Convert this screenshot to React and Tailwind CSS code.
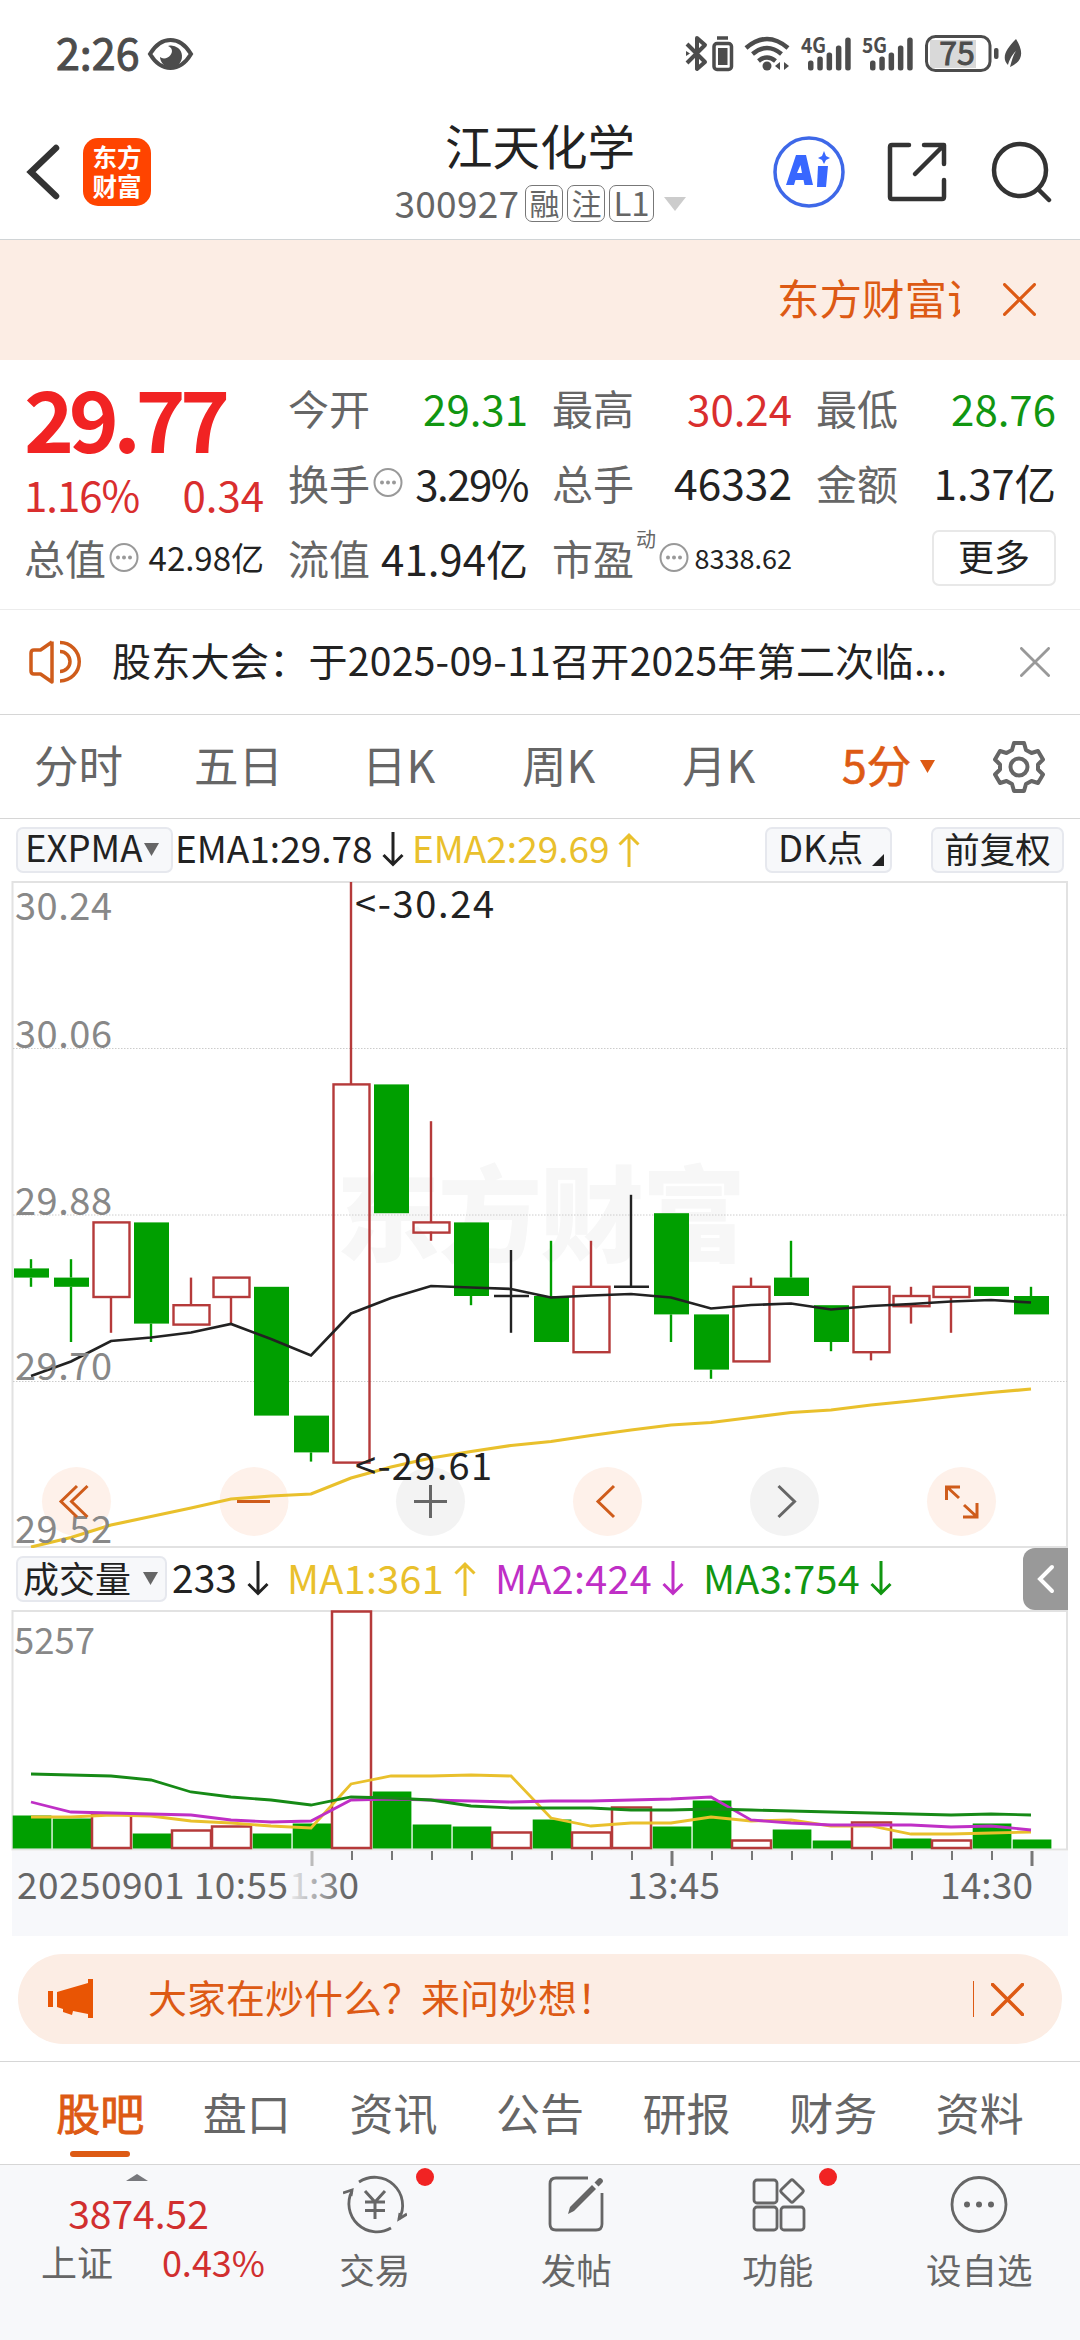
import clsx from "clsx";

const RED = "#b53a3a";
const GREEN = "#009f00";
const INK = "#222222";

// Candles: [type, body top, body bottom, high, low], in cents below 30.24
const candles = [
  ["down", 42, 43, 41, 44],
  ["down", 43, 44, 41, 50],
  ["up", 37, 45, 37, 49],
  ["down", 37, 48, 37, 50],
  ["up", 46, 48, 43, 48],
  ["up", 43, 45, 43, 48],
  ["down", 44, 58, 44, 58],
  ["down", 58, 62, 58, 63],
  ["up", 22, 63, 0, 63],
  ["down", 22, 36, 22, 36],
  ["up", 37, 38, 26, 39],
  ["down", 37, 45, 37, 46],
  ["flat", 45, 45, 40, 49],
  ["down", 45, 50, 39, 50],
  ["up", 44, 51, 39, 51],
  ["flat", 44, 44, 34, 44],
  ["down", 36, 47, 36, 50],
  ["down", 47, 53, 47, 54],
  ["up", 44, 52, 43, 52],
  ["down", 43, 45, 39, 45],
  ["down", 46, 50, 46, 51],
  ["up", 44, 51, 44, 52],
  ["up", 45, 46, 44, 48],
  ["up", 44, 45, 44, 49],
  ["down", 44, 45, 44, 45],
  ["down", 45, 47, 44, 47],
];

const ema1 = [495, 480.5, 460, 456.5, 451.5, 443, 458, 474.5, 432.5, 417, 405, 406.5, 408, 416.5, 414.5, 413, 416.5, 427.5, 424, 422.5, 428.5, 425, 423, 420.5, 419, 421.5];
const ema2 = [666, 656.5, 644, 635.5, 627, 618, 615, 613, 597, 586, 577, 570.5, 564.5, 560.5, 554.5, 549, 544, 541.5, 536.5, 531.5, 529, 524, 520, 515.5, 511.5, 508];

const volumes = [
  ["down", 33], ["down", 30], ["up", 34], ["down", 15], ["up", 18], ["up", 22], ["down", 15],
  ["down", 25], ["up", 237], ["down", 57], ["down", 24], ["down", 22], ["up", 16], ["down", 29],
  ["up", 16], ["up", 41], ["down", 22], ["down", 48], ["up", 8], ["down", 19], ["down", 8],
  ["up", 26], ["down", 10], ["up", 8], ["down", 25], ["down", 9],
];
const volMa1 = [207, 207, 205, 206, 211, 213, 216, 218, 174, 166, 166, 165, 166, 208, 216, 213, 213, 207, 211, 210, 216, 216, 224, 224, 223, 222];
const volMa2 = [192, 202, 203, 204, 205, 210, 212, 211, 190, 189, 190, 191, 192, 191, 191, 190, 189, 187, 210, 213, 215, 215, 215, 217, 216, 220];
const volMa3 = [164, 165, 166, 170, 182, 187, 190, 195, 187, 188, 190, 196, 198, 198, 198, 200, 200, 199, 200, 201, 202, 203, 204, 205, 204, 205];

const cx = (i) => 31 + i * 40;
const toPoints = (list) => list.map((y, i) => `${cx(i)},${y}`).join(" ");

function StatusBar() {
  const bars = [10, 14, 18, 25, 33];
  return (
    <div className="flex h-[108px] items-center justify-between pl-[56px] pr-[50px]">
      <div className="flex items-center gap-[7px]">
        <span className="pb-[5px] text-[43px] leading-none text-[#4c4c4c] [-webkit-text-stroke:1px_#4c4c4c]">2:26</span>
        <svg width="47" height="34" viewBox="0 0 47 34">
          <path d="M3 17C9 7 16 3 23.500 3S38 7 44 17C38 27 31 31 23.500 31S9 27 3 17Z" fill="none" stroke="#4c4c4c" strokeWidth="4" />
          <path d="M23 8.500A11 11 0 1 1 13 20C16 22.500 21 21.500 23.500 18S25.500 11 21 9Z" fill="#4c4c4c" />
        </svg>
      </div>
      <svg width="350" height="46" viewBox="680 31 350 46" fill="none" stroke="#4c4c4c">
        <path d="M687 44L705 62L697 69V38L705 45L687 63" strokeWidth="4" strokeLinejoin="round" />
        <path d="M686 51L690 53.500L686 56Z" fill="#4c4c4c" stroke="none" />
        <path d="M717 38H728" strokeWidth="3.500" />
        <rect x="714" y="43.500" width="17.500" height="26" rx="3" strokeWidth="3.500" />
        <rect x="718" y="48" width="9.500" height="17" fill="#4c4c4c" stroke="none" />
        <path d="M746 48Q767 30 788 48" strokeWidth="4.500" />
        <path d="M752.500 54Q767 42 781.500 54" strokeWidth="4.500" />
        <path d="M758.500 61Q767 54 775.500 61" strokeWidth="4.500" />
        <circle cx="767" cy="66" r="4.500" fill="#4c4c4c" stroke="none" />
        <path d="M780 62V70L775 66ZM784 62V70L789 66Z" fill="#4c4c4c" stroke="none" />
        <g fill="#4c4c4c" stroke="none" fontWeight="700" fontSize="21">
          <text x="801" y="53" textLength="25" lengthAdjust="spacingAndGlyphs">4G</text>
          <text x="862" y="53" textLength="25" lengthAdjust="spacingAndGlyphs">5G</text>
          {[808, 870].map((left) =>
            bars.map((h, i) => (
              <rect key={`${left}-${i}`} x={left + i * 9.3} y={70.5 - h} width="5.500" height={h} rx="2.500" />
            ))
          )}
        </g>
        <rect x="930" y="40" width="46" height="28" fill="#d9d9d9" stroke="none" />
        <rect x="926.500" y="36.500" width="63.500" height="34" rx="9" strokeWidth="3" />
        <rect x="994" y="48" width="4.500" height="11" rx="2" fill="#4c4c4c" stroke="none" />
        <text x="957" y="65" textAnchor="middle" fontSize="32" fill="#4c4c4c" strokeWidth="1">75</text>
        <path d="M1016 39C1023 50 1024 60 1012 66L1010 67C1012 60 1013 55 1016 51C1011 56 1009 61 1008 65C1001 58 1006 49 1016 39Z" fill="#4c4c4c" stroke="none" />
      </svg>
    </div>
  );
}

function Badge({ children }) {
  return (
    <span className="flex h-[37px] items-center justify-center rounded-[7px] border border-[#777] px-[3px] pb-[3px] text-[30px] leading-none">
      {children}
    </span>
  );
}

function Header() {
  return (
    <div className="flex h-[132px] items-center border-b border-[#d0d4d6]">
      <div className="flex w-[380px] items-center pb-[3px] pl-[26px]">
        <svg width="34" height="56" viewBox="0 0 34 56" fill="none">
          <path d="M30 4L5 28L30 52" stroke="#333" strokeWidth="6.500" strokeLinecap="round" />
        </svg>
        <div className="ml-[23px] flex h-[68px] w-[68px] flex-col items-center justify-center rounded-[15px] bg-[#ff4400] pb-[3px] text-[24.500px] font-bold leading-[29px] text-white">
          <span>东方</span>
          <span>财富</span>
        </div>
      </div>
      <div className="flex w-[320px] flex-col items-center">
        <span className="text-[47.500px] leading-[59px] text-[#222]">江天化学</span>
        <div className="flex items-center gap-[4px] pb-px pt-[2px] text-[#666]">
          <span className="mr-[2px] pb-[4px] text-[37px] leading-[52px] tracking-[0.300px]">300927</span>
          <Badge>融</Badge>
          <Badge>注</Badge>
          <Badge>
            <span className="text-[33px]">L1</span>
          </Badge>
          <svg width="22" height="14" viewBox="0 0 22 14" className="ml-[6px]">
            <path d="M0 0H22L11 14Z" fill="#ccc" />
          </svg>
        </div>
      </div>
      <div className="flex flex-1 items-center pb-[3px] pl-[72px]">
        <svg width="74" height="74" viewBox="0 0 74 74">
          <circle cx="37" cy="37" r="34" fill="none" stroke="#3e68e8" strokeWidth="3.500" />
          <path d="M14 50L24 20H34L41 50H32.500L31.500 45H23.500L22 50ZM25 38H30L28.500 30Z" fill="#3867ff" fillRule="evenodd" />
          <path d="M46 31H56L54 52H45Z" fill="#3867ff" />
          <path d="M52 16L54 21L58 23L54 25L52 29L50 25L46 23L50 21Z" fill="#3867ff" />
        </svg>
        <svg width="60" height="60" viewBox="0 0 60 60" fill="none" stroke="#333" strokeWidth="4.500" strokeLinecap="round" strokeLinejoin="round" className="ml-[41px]">
          <path d="M22 3H5Q3 3 3 5V55Q3 57 5 57H55Q57 57 57 55V38" />
          <path d="M37 3H57V22M56 4L28 32" />
        </svg>
        <svg width="62" height="64" viewBox="0 0 62 64" fill="none" stroke="#333" strokeWidth="4.500" strokeLinecap="round" className="ml-[43px]">
          <circle cx="30" cy="30" r="26" />
          <path d="M48 49L59 60" />
        </svg>
      </div>
    </div>
  );
}

function Cross({ size, color, width }) {
  return (
    <svg width={size} height={size} viewBox="0 0 32 32">
      <path d="M1.500 1.500L30.500 30.500M30.500 1.500L1.500 30.500" stroke={color} strokeWidth={width} strokeLinecap="round" />
    </svg>
  );
}

function Marquee() {
  return (
    <div className="flex h-[120px] items-center bg-[#fcede4] pb-[2px] pl-[777px]">
      <div className="w-[183px] overflow-hidden whitespace-nowrap pb-[5px] text-[42.500px] leading-[60px] text-[#dd5a14]">东方财富证券</div>
      <div className="ml-[43px]">
        <Cross size={33} color="#dd5a14" width={3} />
      </div>
    </div>
  );
}

function InfoDot() {
  return (
    <svg width="30" height="31" viewBox="0 0 30 31" className="ml-[3px] shrink-0">
      <circle cx="15" cy="15.500" r="13.500" fill="none" stroke="#999" strokeWidth="2" />
      <circle cx="9" cy="15.500" r="2" fill="#999" />
      <circle cx="15" cy="15.500" r="2" fill="#999" />
      <circle cx="21" cy="15.500" r="2" fill="#999" />
    </svg>
  );
}

function Stat({ label, sup, info, value, valueClass = "text-[42.500px] text-[#222]" }) {
  return (
    <div className="flex h-[75px] items-center whitespace-nowrap pb-[6px] leading-none">
      <span className="text-[41px] text-[#666]">{label}</span>
      {sup && <span className="mb-[38px] ml-[2px] text-[20px] text-[#666]">{sup}</span>}
      {info && <InfoDot />}
      <span className={clsx("ml-auto", valueClass)}>{value}</span>
    </div>
  );
}

function Quote() {
  return (
    <div className="grid h-[250px] grid-cols-4 gap-x-6 border-b border-[#ececec] px-6 pt-[13px]">
      <div>
        <div className="flex h-[84px] items-center whitespace-nowrap text-[85px] font-bold leading-none tracking-[-5.500px] text-[#f12323]">
          29.77
        </div>
        <div className="flex h-[66px] items-center justify-between pt-[7px] text-[42px] leading-none text-[#d92e2e]">
          <span className="tracking-[-1px]">1.16%</span>
          <span>0.34</span>
        </div>
        <Stat label="总值" info value="42.98亿" valueClass="text-[33px] text-[#222]" />
      </div>
      <div>
        <Stat label="今开" value="29.31" valueClass="text-[42px] text-[#119611]" />
        <Stat label="换手" info value="3.29%" valueClass="text-[42px] tracking-[-1.500px] text-[#222]" />
        <Stat label="流值" value="41.94亿" valueClass="text-[42px] text-[#222]" />
      </div>
      <div>
        <Stat label="最高" value="30.24" valueClass="text-[42px] text-[#d92e2e]" />
        <Stat label="总手" value="46332" />
        <Stat label="市盈" sup="动" info value="8338.62" valueClass="text-[27px] text-[#222]" />
      </div>
      <div>
        <Stat label="最低" value="28.76" valueClass="text-[42px] text-[#119611]" />
        <Stat label="金额" value="1.37亿" valueClass="text-[41.500px] text-[#222]" />
        <div className="flex h-[70px] items-center justify-end">
          <div className="flex h-[56px] w-[124px] items-center justify-center rounded-[7px] border-2 border-[#e8e8e8] pb-[6px] text-[36px] leading-none text-[#222]">
            更多
          </div>
        </div>
      </div>
    </div>
  );
}

function Notice() {
  return (
    <div className="flex h-[105px] items-center border-b border-[#d6d6d6] pl-[28px] pr-[30px]">
      <svg width="54" height="46" viewBox="0 0 54 46" fill="none" stroke="#cf5c1b" strokeWidth="3.500">
        <path d="M24 2.500V43L12.500 35H6Q3 35 3 32V14Q3 11 6 11H12.500L24 3" strokeLinejoin="round" />
        <path d="M32 3.500A19 19 0 0 1 32 42" />
        <path d="M32 12.500A9.700 9.700 0 0 1 32 32.500" />
      </svg>
      <span className="ml-[30px] whitespace-nowrap pb-[5px] text-[39px] leading-none tracking-[0.300px] text-[#222]">
        股东大会：于2025-09-11召开2025年第二次临...
      </span>
      <div className="ml-auto">
        <Cross size={30} color="#999" width={3} />
      </div>
    </div>
  );
}

function PeriodTabs() {
  const tabs = ["分时", "五日", "日K", "周K", "月K"];
  return (
    <div className="flex h-[104px] items-center border-b border-[#d6d6d6] text-[44.500px] leading-none text-[#666]">
      {tabs.map((t) => (
        <span key={t} className="w-[160px] pb-[5px] pr-[3px] text-center">{t}</span>
      ))}
      <div className="flex w-[180px] items-center pl-[42px] text-[#dd5a14] [-webkit-text-stroke:0.700px_#dd5a14]">
        <span className="pb-[5px]">5分</span>
        <svg width="16" height="14" viewBox="0 0 16 14" className="ml-[9px]">
          <path d="M0 0H15L7.500 13Z" fill="#dd5a14" />
        </svg>
      </div>
      <svg width="54" height="54" viewBox="0 0 54 54" fill="none" stroke="#666" strokeWidth="4" strokeLinejoin="round" className="ml-[12px]">
        <path d="M22 3H32L34 10L39.500 13L46 11L51 19.500L46 24.500V29.500L51 34.500L46 43L39.500 41L34 44L32 51H22L20 44L14.500 41L8 43L3 34.500L8 29.500V24.500L3 19.500L8 11L14.500 13L20 10Z" />
        <circle cx="27" cy="27" r="8.500" />
      </svg>
    </div>
  );
}

function Arrow({ up, color }) {
  return (
    <svg width="22" height="36" viewBox="0 0 22 36" fill="none" stroke={color} strokeWidth="3" className="shrink-0">
      <path d={up ? "M11 35V3M1.500 12.500L11 3L20.500 12.500" : "M11 0V32M1.500 23L11 32.500L20.500 23"} />
    </svg>
  );
}

const chip = "flex h-[46px] items-center rounded-[7px] border-2 border-[#e6e8ee] bg-[#f7f8fa]";

function IndicatorRow() {
  return (
    <div className="flex h-[62px] items-center whitespace-nowrap pl-[16px] pr-[16px] text-[36.500px] leading-none text-[#222]">
      <div className={clsx(chip, "w-[157px] pl-[7px]")}>
        <span className="pb-[5px]">EXPMA</span>
        <svg width="16" height="14" viewBox="0 0 16 14" className="ml-[2px]">
          <path d="M0 0H15L7.500 13Z" fill="#666" />
        </svg>
      </div>
      <span className="ml-[2px] w-[207px] pb-[5px] text-[37px]">EMA1:29.78</span>
      <Arrow color={INK} />
      <span className="ml-[8px] w-[206px] pb-[5px] text-[37px] text-[#e9c02c]">EMA2:29.69</span>
      <Arrow up color="#e9c02c" />
      <div className={clsx(chip, "ml-auto w-[127px] pl-[11px]")}>
        <span className="pb-[5px]">DK点</span>
        <svg width="12" height="12" viewBox="0 0 12 12" className="ml-[9px] mt-[20px] shrink-0">
          <path d="M12 0V12H0Z" fill="#222" />
        </svg>
      </div>
      <div className={clsx(chip, "ml-[39px] w-[133px] justify-center text-[35.500px]")}>
        <span className="pb-[5px]">前复权</span>
      </div>
    </div>
  );
}

function Candle({ item, i }) {
  const [type, top, bottom, high, low] = item;
  const x = cx(i);
  const y = (n) => 1 + n * 9.2;
  const color = type === "up" ? RED : type === "down" ? GREEN : INK;
  return (
    <g stroke={color} strokeWidth="2.400">
      {high < top && <path d={`M${x} ${y(high)}V${y(top)}`} />}
      {low > bottom && <path d={`M${x} ${y(bottom)}V${y(low)}`} />}
      {type === "up" && <rect x={x - 17.5} y={y(top)} width="36" height={y(bottom) - y(top) + 1} fill="none" />}
      {type === "down" && <rect x={x - 17} y={y(top)} width="35" height={y(bottom) - y(top)} fill={GREEN} stroke="none" />}
      {type === "flat" && <path d={`M${x - 17} ${y(top)}H${x + 18}`} />}
    </g>
  );
}

function PriceChart() {
  const labels = [
    ["30.24", 39],
    ["30.06", 167],
    ["29.88", 334],
    ["29.70", 499],
    ["29.52", 662],
  ];
  return (
    <svg width="1080" height="667" viewBox="0 0 1080 667" className="block">
      <text x="336" y="373" textLength="410" fill="#f7f7f7" fontSize="104" fontWeight="900">东方财富</text>
      <rect x="12.500" y="1" width="1054.500" height="665" fill="none" stroke="#e2e2e2" strokeWidth="2" />
      <path d="M13 167.500H1067M13 334H1067M13 500.500H1067" stroke="#ccc" strokeDasharray="1.500 1.500" />
      {[["#fef1ea", 76.5], ["#fef1ea", 254], ["#f3f3f3", 430.5], ["#fef1ea", 607.5], ["#f3f3f3", 784.5], ["#fef1ea", 961.5]].map(([fill, x]) => (
        <circle key={x} cx={x} cy="620.500" r="34.500" fill={fill} />
      ))}
      {candles.map((c, i) => (
        <Candle key={i} item={c} i={i} />
      ))}
      <polyline points={toPoints(ema1)} fill="none" stroke={INK} strokeWidth="2.700" />
      <polyline points={toPoints(ema2)} fill="none" stroke="#e9c02c" strokeWidth="3.200" />
      <g fontSize="38" fill="#888">
        {labels.map(([text, y]) => (
          <text key={text} x="15" y={y} textLength="97">{text}</text>
        ))}
      </g>
      <g fontSize="38" fill={INK}>
        <text x="355" y="37" textLength="139">&lt;-30.24</text>
        <text x="355" y="599" textLength="137">&lt;-29.61</text>
      </g>
      <g fill="none" stroke="#cf5c1b" strokeWidth="3">
        <path d="M77 605L61 620.500L77 636M87.500 605L71.500 620.500L87.500 636" />
        <path d="M237 620.500H270" />
        <path d="M414 620.500H447M430.500 604V637" stroke="#666" />
        <path d="M614 605L598 620.500L614 636" />
        <path d="M778.500 605L794.500 620.500L778.500 636" stroke="#666" />
        <path d="M946.500 619V606H960M947 606L959 617M964 624L976 635M977 622V636H963" />
      </g>
    </svg>
  );
}

function VolumeHeader() {
  return (
    <div className="flex h-[62px] items-center whitespace-nowrap pl-[16px] pr-[12px] text-[39.500px] leading-none text-[#222]">
      <div className={clsx(chip, "w-[151px] shrink-0 pl-[5px] text-[36px]")}>
        <span className="pb-[5px]">成交量</span>
        <svg width="16" height="14" viewBox="0 0 16 14" className="ml-[12px]">
          <path d="M0 0H15L7.500 13Z" fill="#666" />
        </svg>
      </div>
      <span className="ml-[5px] w-[75px] pb-[5px] text-[39px]">233</span>
      <Arrow color={INK} />
      <span className="ml-[18px] w-[167px] pb-[5px] tracking-[0.300px] text-[#e9c02c]">MA1:361</span>
      <Arrow up color="#e9c02c" />
      <span className="ml-[19px] w-[167px] pb-[5px] tracking-[0.300px] text-[#bf2fc6]">MA2:424</span>
      <Arrow color="#bf2fc6" />
      <span className="ml-[19px] w-[167px] pb-[5px] tracking-[0.300px] text-[#119611]">MA3:754</span>
      <Arrow color="#119611" />
      <div className="ml-auto flex h-[62px] w-[45px] shrink-0 items-center justify-center rounded-l-[12px] bg-[#999]">
        <svg width="18" height="30" viewBox="0 0 18 30" fill="none">
          <path d="M15 3L3 15L15 27" stroke="white" strokeWidth="4" strokeLinecap="round" />
        </svg>
      </div>
    </div>
  );
}

function VolumeChart() {
  return (
    <svg width="1080" height="326" viewBox="0 0 1080 326" className="block">
      <defs>
        <linearGradient id="fade" gradientUnits="userSpaceOnUse" x1="288" y1="0" x2="345" y2="0">
          <stop offset="0" stopColor="#f0f0f2" />
          <stop offset="1" stopColor="#666" />
        </linearGradient>
      </defs>
      <rect x="12" y="241" width="1056" height="85" fill="#f7f8fb" />
      <rect x="12.500" y="1" width="1054.500" height="238.500" fill="none" stroke="#e2e2e2" strokeWidth="2" />
      <text x="14" y="43.500" fontSize="36.500" fill="#888">5257</text>
      {volumes.map(([type, h], i) =>
        type === "up" ? (
          <rect key={i} x={12 + i * 40} y={238.5 - h} width="39" height={h - 0.5} fill="white" stroke={RED} strokeWidth="2.500" />
        ) : (
          <rect key={i} x={12.7 + i * 40} y={238.5 - h} width="38.700" height={h} fill={GREEN} />
        )
      )}
      <g fill="none" strokeWidth="2.800">
        <polyline points={toPoints(volMa1)} stroke="#e9c02c" />
        <polyline points={toPoints(volMa2)} stroke="#bf2fc6" />
        <polyline points={toPoints(volMa3)} stroke="#168a16" />
      </g>
      {Array.from({ length: 19 }, (_, i) => {
        const major = i % 9 === 0;
        return (
          <path
            key={i}
            d={`M${312 + i * 40} 241V${major ? 256 : 250}`}
            stroke={i === 0 ? "#bbb" : "#777"}
            strokeWidth={major ? 3 : 2}
          />
        );
      })}
      <g fontSize="37" fill="#666">
        <text x="17" y="289" textLength="271">20250901 10:55</text>
        <text x="289" y="289" textLength="70" fill="url(#fade)">1:30</text>
        <text x="627" y="289" textLength="93">13:45</text>
        <text x="940" y="289" textLength="93">14:30</text>
      </g>
    </svg>
  );
}

function AskBanner() {
  return (
    <div className="px-[18px] pb-[17px] pt-[18px]">
      <div className="flex h-[90px] items-center rounded-full bg-[#fcede4] pl-[29px] pr-[38px]">
        <svg width="47" height="40" viewBox="0 0 47 40" fill="#e95504">
          <rect x="1" y="12" width="5" height="16" />
          <path d="M10 13L41 4V0H46V39H41V35L26 32L25 36L16 33V30L10 28Z" />
        </svg>
        <span className="ml-[54px] whitespace-nowrap pb-[6px] text-[39px] leading-none text-[#dd5a14]">
          大家在炒什么？来问妙想！
        </span>
        <div className="ml-auto mr-[17px] h-[36px] w-px bg-[#dd5a14]" />
        <Cross size={33} color="#dd5a14" width={3.5} />
      </div>
    </div>
  );
}

function ContentTabs() {
  const tabs = ["股吧", "盘口", "资讯", "公告", "研报", "财务", "资料"];
  return (
    <div className="flex h-[104px] border-y border-[#d6d6d6] px-[27px] text-[44px] leading-none text-[#666]">
      {tabs.map((t, i) => (
        <div key={t} className="flex flex-1 flex-col items-center">
          <span className={clsx("flex h-[89px] items-center pt-[10px]", i === 0 && "text-[#dd5a14] [-webkit-text-stroke:0.900px_#dd5a14]")}>{t}</span>
          {i === 0 && <div className="h-[6px] w-[60px] rounded-full bg-[#dd5a14]" />}
        </div>
      ))}
    </div>
  );
}

const navItems = [
  {
    label: "交易",
    dot: true,
    icon: (
      <>
        <path d="M16 9A28 28 0 0 1 56 46M48 55A28 28 0 0 1 9 18" />
        <path d="M64 41L56 46L57 40M0 20L9 17L8 23" />
        <path d="M22 18L32 29L42 18M32 29V46M22 29H42M22 37.500H42" strokeWidth="3" />
      </>
    ),
  },
  {
    label: "发帖",
    icon: (
      <>
        <path d="M44 5H12Q6 5 6 11V51Q6 57 12 57H52Q58 57 58 51V20" />
        <path d="M24 41L26 34L48 12L52 16L30 38ZM50.500 9.500L54 6Q56 4 58 6T58 10L54.500 13.500Z" fill="#666" stroke="none" />
      </>
    ),
  },
  {
    label: "功能",
    dot: true,
    icon: (
      <>
        <rect x="8" y="7" width="23" height="23" rx="3" />
        <rect x="8" y="34" width="23" height="23" rx="3" />
        <rect x="35" y="34" width="23" height="23" rx="3" />
        <rect x="37.500" y="9.500" width="17" height="17" rx="2" transform="rotate(45 46 18)" />
      </>
    ),
  },
  {
    label: "设自选",
    icon: (
      <>
        <circle cx="32" cy="31.500" r="27" />
        <g fill="#666" stroke="none">
          <circle cx="20" cy="31.500" r="3" />
          <circle cx="32" cy="31.500" r="3" />
          <circle cx="44" cy="31.500" r="3" />
        </g>
      </>
    ),
  },
];

function BottomNav() {
  return (
    <div className="flex h-[175px] bg-[#f7f8fa] leading-none">
      <div className="flex w-[274px] flex-col items-center pt-[9px]">
        <svg width="22" height="7" viewBox="0 0 22 7">
          <path d="M0 7L11 0L22 7Z" fill="#77787c" />
        </svg>
        <span className="ml-[3px] mt-[10px] text-[39px] leading-[42px] text-[#d12f2f]">3874.52</span>
        <div className="mt-[6px] flex w-[256px] items-center justify-between text-[36px] leading-[44px]">
          <span className="pl-[32px] text-[#666]">上证</span>
          <span className="text-[#d12f2f]">0.43%</span>
        </div>
      </div>
      {navItems.map((item) => (
        <div key={item.label} className="relative flex flex-1 flex-col items-center pt-[8px] text-[35.500px] text-[#666]">
          <svg width="64" height="62" viewBox="0 0 64 62" fill="none" stroke="#666" strokeWidth="2.800">
            {item.icon}
          </svg>
          <span className="mt-[16px]">{item.label}</span>
          {item.dot && <i className="absolute left-[142px] top-[3px] h-[18px] w-[18px] rounded-full bg-[#f12323]" />}
        </div>
      ))}
    </div>
  );
}

export default function App() {
  return (
    <div className="h-[2340px] w-[1080px] overflow-hidden bg-white font-['Noto_Sans_CJK_SC','Noto_Sans',sans-serif]">
      <StatusBar />
      <Header />
      <Marquee />
      <Quote />
      <Notice />
      <PeriodTabs />
      <IndicatorRow />
      <PriceChart />
      <VolumeHeader />
      <VolumeChart />
      <AskBanner />
      <ContentTabs />
      <BottomNav />
    </div>
  );
}
